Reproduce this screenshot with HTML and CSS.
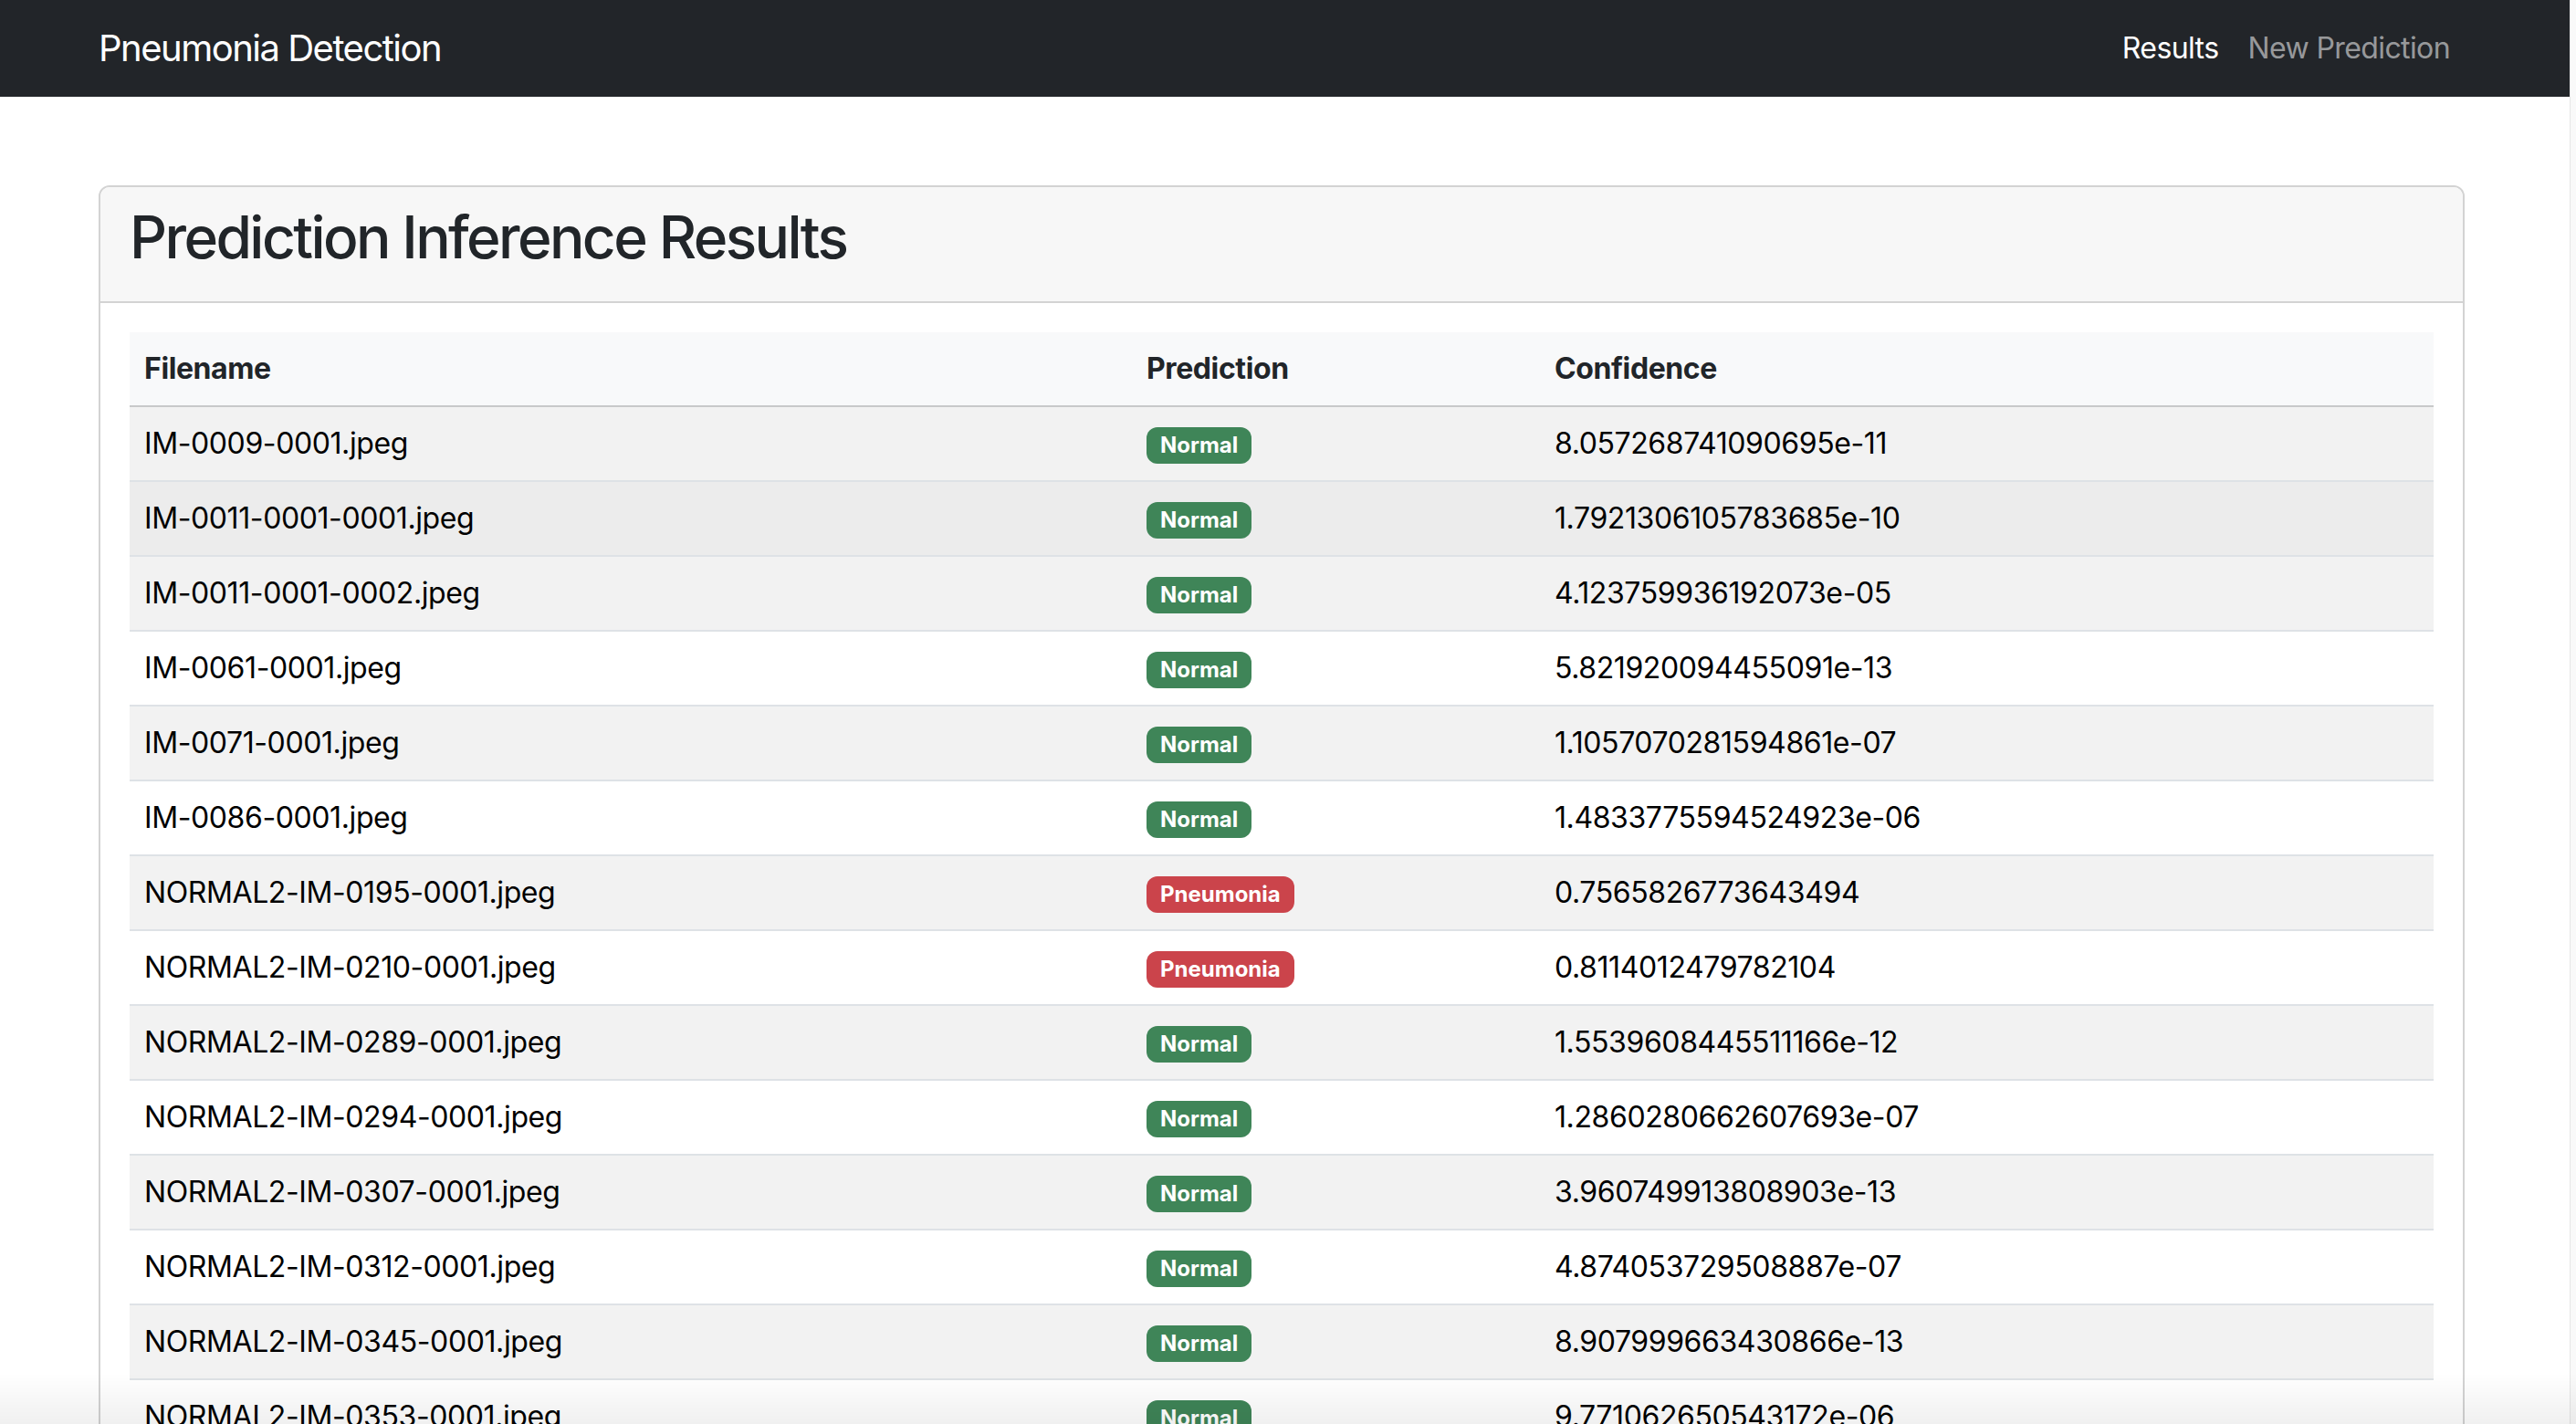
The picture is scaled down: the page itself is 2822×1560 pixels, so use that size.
FILE: index.html
```html
<!DOCTYPE html>
<html lang="en">
<head>
<meta charset="utf-8">
<title>Pneumonia Detection - Results</title>
<link rel="stylesheet" href="styles.css">
</head>
<body>
<nav class="navbar">
  <div class="container nav-inner">
    <a class="brand" href="#">Pneumonia Detection</a>
    <ul class="nav-links">
      <li><a class="nav-link active" href="#">Results</a></li>
      <li><a class="nav-link" href="#">New Prediction</a></li>
    </ul>
  </div>
</nav>

<main class="container page">
  <section class="card">
    <div class="card-header">
      <h1 class="card-title">Prediction Inference Results</h1>
    </div>
    <div class="card-body">
      <table class="results">
        <colgroup>
          <col class="col-file">
          <col class="col-pred">
          <col class="col-conf">
        </colgroup>
        <thead>
          <tr><th>Filename</th><th>Prediction</th><th>Confidence</th></tr>
        </thead>
        <tbody>
          <tr class="odd"><td>IM-0009-0001.jpeg</td><td><span class="badge normal">Normal</span></td><td>8.057268741090695e-11</td></tr>
          <tr class="hover"><td>IM-0011-0001-0001.jpeg</td><td><span class="badge normal">Normal</span></td><td>1.7921306105783685e-10</td></tr>
          <tr class="odd"><td>IM-0011-0001-0002.jpeg</td><td><span class="badge normal">Normal</span></td><td>4.123759936192073e-05</td></tr>
          <tr><td>IM-0061-0001.jpeg</td><td><span class="badge normal">Normal</span></td><td>5.821920094455091e-13</td></tr>
          <tr class="odd"><td>IM-0071-0001.jpeg</td><td><span class="badge normal">Normal</span></td><td>1.1057070281594861e-07</td></tr>
          <tr><td>IM-0086-0001.jpeg</td><td><span class="badge normal">Normal</span></td><td>1.4833775594524923e-06</td></tr>
          <tr class="odd"><td>NORMAL2-IM-0195-0001.jpeg</td><td><span class="badge pneumonia">Pneumonia</span></td><td>0.7565826773643494</td></tr>
          <tr><td>NORMAL2-IM-0210-0001.jpeg</td><td><span class="badge pneumonia">Pneumonia</span></td><td>0.8114012479782104</td></tr>
          <tr class="odd"><td>NORMAL2-IM-0289-0001.jpeg</td><td><span class="badge normal">Normal</span></td><td>1.5539608445511166e-12</td></tr>
          <tr><td>NORMAL2-IM-0294-0001.jpeg</td><td><span class="badge normal">Normal</span></td><td>1.2860280662607693e-07</td></tr>
          <tr class="odd"><td>NORMAL2-IM-0307-0001.jpeg</td><td><span class="badge normal">Normal</span></td><td>3.960749913808903e-13</td></tr>
          <tr><td>NORMAL2-IM-0312-0001.jpeg</td><td><span class="badge normal">Normal</span></td><td>4.874053729508887e-07</td></tr>
          <tr class="odd"><td>NORMAL2-IM-0345-0001.jpeg</td><td><span class="badge normal">Normal</span></td><td>8.907999663430866e-13</td></tr>
          <tr><td>NORMAL2-IM-0353-0001.jpeg</td><td><span class="badge normal">Normal</span></td><td>9.771062650543172e-06</td></tr>
        </tbody>
      </table>
    </div>
  </section>
</main>

<div class="scroll-track"></div>
<div class="bottom-fade"></div>
</body>
</html>
```
FILE: styles.css
```css
html {
  overflow: hidden;
}
body {
  margin: 0;
  font-family: Inter, "Noto Sans", "Liberation Sans", sans-serif;
  font-size: 32px;
  line-height: 48px;
  letter-spacing: -0.4px;
  color: #212529;
  background: #ffffff;
}
.container {
  width: 2592px;
  margin-left: 108px;
  box-sizing: border-box;
}
.navbar {
  background: #222529;
  height: 106px;
}
.nav-inner {
  height: 106px;
  display: flex;
  align-items: center;
  justify-content: space-between;
}
.brand {
  color: #ffffff;
  text-decoration: none;
  font-size: 40px;
  line-height: 60px;
  letter-spacing: -1.5px;
}
.nav-links {
  list-style: none;
  margin: 0;
  padding: 0;
  display: flex;
}
.nav-link {
  display: block;
  padding: 16px 16px;
  color: rgba(255, 255, 255, 0.55);
  text-decoration: none;
  font-size: 32px;
  line-height: 48px;
  letter-spacing: -0.6px;
}
.nav-link.active {
  color: #ffffff;
}
.page {
  padding-top: 97px;
}
.card {
  border: 2px solid #d3d3d3;
  border-radius: 12px;
  background: #ffffff;
}
.card-header {
  background: #f7f7f7;
  border-bottom: 2px solid #d3d3d3;
  border-radius: 10px 10px 0 0;
  padding: 16px 32px;
}
.card-title {
  margin: 0 0 16px 0;
  font-size: 64px;
  line-height: 77px;
  font-weight: 500;
  letter-spacing: -2.6px;
  color: #212529;
}
.card-body {
  padding: 32px;
}
.results {
  width: 100%;
  border-collapse: collapse;
  table-layout: fixed;
}
.col-file { width: 1098px; }
.col-pred { width: 447px; }
.col-conf { width: auto; }
.results th {
  text-align: left;
  font-weight: 700;
  background: #f8f9fa;
  padding: 16px;
  height: 48px;
  border-bottom: 2px solid #c8c9ca;
}
.results td {
  padding: 16px;
  height: 48px;
  border-bottom: 2px solid #dee2e6;
  color: #000000;
}
.results tr.odd td {
  background: #f2f2f2;
}
.results tr.hover td {
  background: #ececec;
}
.badge {
  display: inline-block;
  font-size: 24px;
  font-weight: 700;
  line-height: 24px;
  letter-spacing: 0;
  padding: 8px 15px;
  border-radius: 12px;
  color: #ffffff;
  vertical-align: 1px;
}
.badge.normal {
  background: #3f8558;
}
.badge.pneumonia {
  background: #cb444b;
}
.scroll-track {
  position: fixed;
  top: 0;
  right: 0;
  width: 6px;
  height: 100%;
  background: #f9f9f9;
  border-left: 1px solid #e6e6e6;
}
.bottom-fade {
  position: fixed;
  left: 0;
  right: 0;
  bottom: 0;
  height: 56px;
  background: linear-gradient(to bottom, rgba(0, 0, 0, 0), rgba(0, 0, 0, 0.06));
  pointer-events: none;
}
```
